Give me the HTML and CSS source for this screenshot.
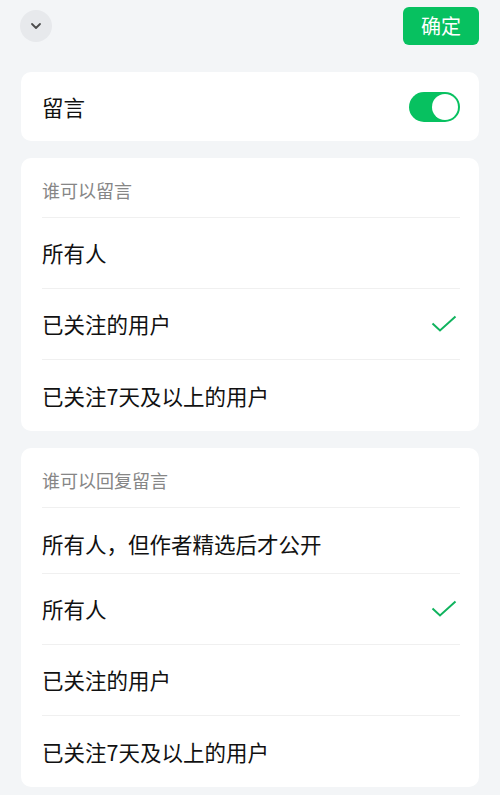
FILE: index.html
```html
<!DOCTYPE html>
<html lang="zh-CN">
<head>
<meta charset="utf-8">
<link rel="stylesheet" href="styles.css">
</head>
<body>
<div class="page">
  <header class="topbar">
    <div class="collapse">
      <svg width="14" height="14" viewBox="0 0 14 14"><path d="M3 5 L7 9 L11 5" fill="none" stroke="#4c4c4c" stroke-width="1.8" stroke-linecap="round" stroke-linejoin="round"/></svg>
    </div>
    <button class="confirm">确定</button>
  </header>

  <section class="card toggle-card">
    <span class="label">留言</span>
    <div class="switch"><div class="knob"></div></div>
  </section>

  <section class="card">
    <div class="card-head">谁可以留言</div>
    <div class="row"><span class="label">所有人</span></div>
    <div class="row"><span class="label">已关注的用户</span><svg class="check" width="26" height="18" viewBox="0 0 26 18"><path d="M1.5 8.5 L9 15.5 L24.5 1.5" fill="none" stroke="#10b35e" stroke-width="2"/></svg></div>
    <div class="row"><span class="label">已关注7天及以上的用户</span></div>
  </section>

  <section class="card">
    <div class="card-head">谁可以回复留言</div>
    <div class="row row-short"><span class="label">所有人，但作者精选后才公开</span></div>
    <div class="row"><span class="label">所有人</span><svg class="check" width="26" height="18" viewBox="0 0 26 18"><path d="M1.5 8.5 L9 15.5 L24.5 1.5" fill="none" stroke="#10b35e" stroke-width="2"/></svg></div>
    <div class="row"><span class="label">已关注的用户</span></div>
    <div class="row"><span class="label">已关注7天及以上的用户</span></div>
  </section>
</div>
</body>
</html>
```

FILE: styles.css
```css
* { box-sizing: border-box; }
html, body {
  margin: 0;
  padding: 0;
  background: #f3f5f7;
}
body {
  font-family: "Noto Sans CJK SC", "Noto Sans", sans-serif;
  color: #111;
}
.page {
  width: 500px;
  padding: 0 21px;
}
.topbar {
  height: 72px;
  display: flex;
  justify-content: space-between;
  align-items: flex-start;
}
.collapse {
  width: 32px;
  height: 32px;
  margin-top: 10px;
  margin-left: -1px;
  border-radius: 50%;
  background: #e7e9ec;
  display: flex;
  align-items: center;
  justify-content: center;
}
.confirm {
  margin-top: 7px;
  width: 76px;
  height: 38px;
  border: none;
  border-radius: 6px;
  background: #07c160;
  color: #fff;
  font-family: inherit;
  font-size: 20px;
  padding: 0;
  line-height: 38px;
}
.card {
  background: #fff;
  border-radius: 10px;
  padding: 0 19px 0 21px;
  margin-bottom: 17px;
}
.toggle-card {
  height: 69px;
  display: flex;
  align-items: center;
  justify-content: space-between;
}
.label {
  font-size: 21.5px;
  line-height: 1;
}
.switch {
  width: 51px;
  height: 30px;
  border-radius: 15px;
  background: #07c160;
  display: flex;
  justify-content: flex-end;
  align-items: center;
  padding: 2px;
}
.knob {
  width: 26px;
  height: 26px;
  border-radius: 50%;
  background: #fff;
}
.card-head {
  height: 60px;
  display: flex;
  align-items: center;
  padding-top: 4px;
  font-size: 18px;
  color: #868686;
  border-bottom: 1px solid #f0f0f0;
}
.row {
  height: 71px;
  display: flex;
  align-items: center;
  justify-content: space-between;
  border-bottom: 1px solid #f0f0f0;
  padding-right: 2px;
}
.row:last-child { border-bottom: none; }
.row-short { height: 66px; padding-top: 6px; }
.check { margin-right: 1px; }
```
